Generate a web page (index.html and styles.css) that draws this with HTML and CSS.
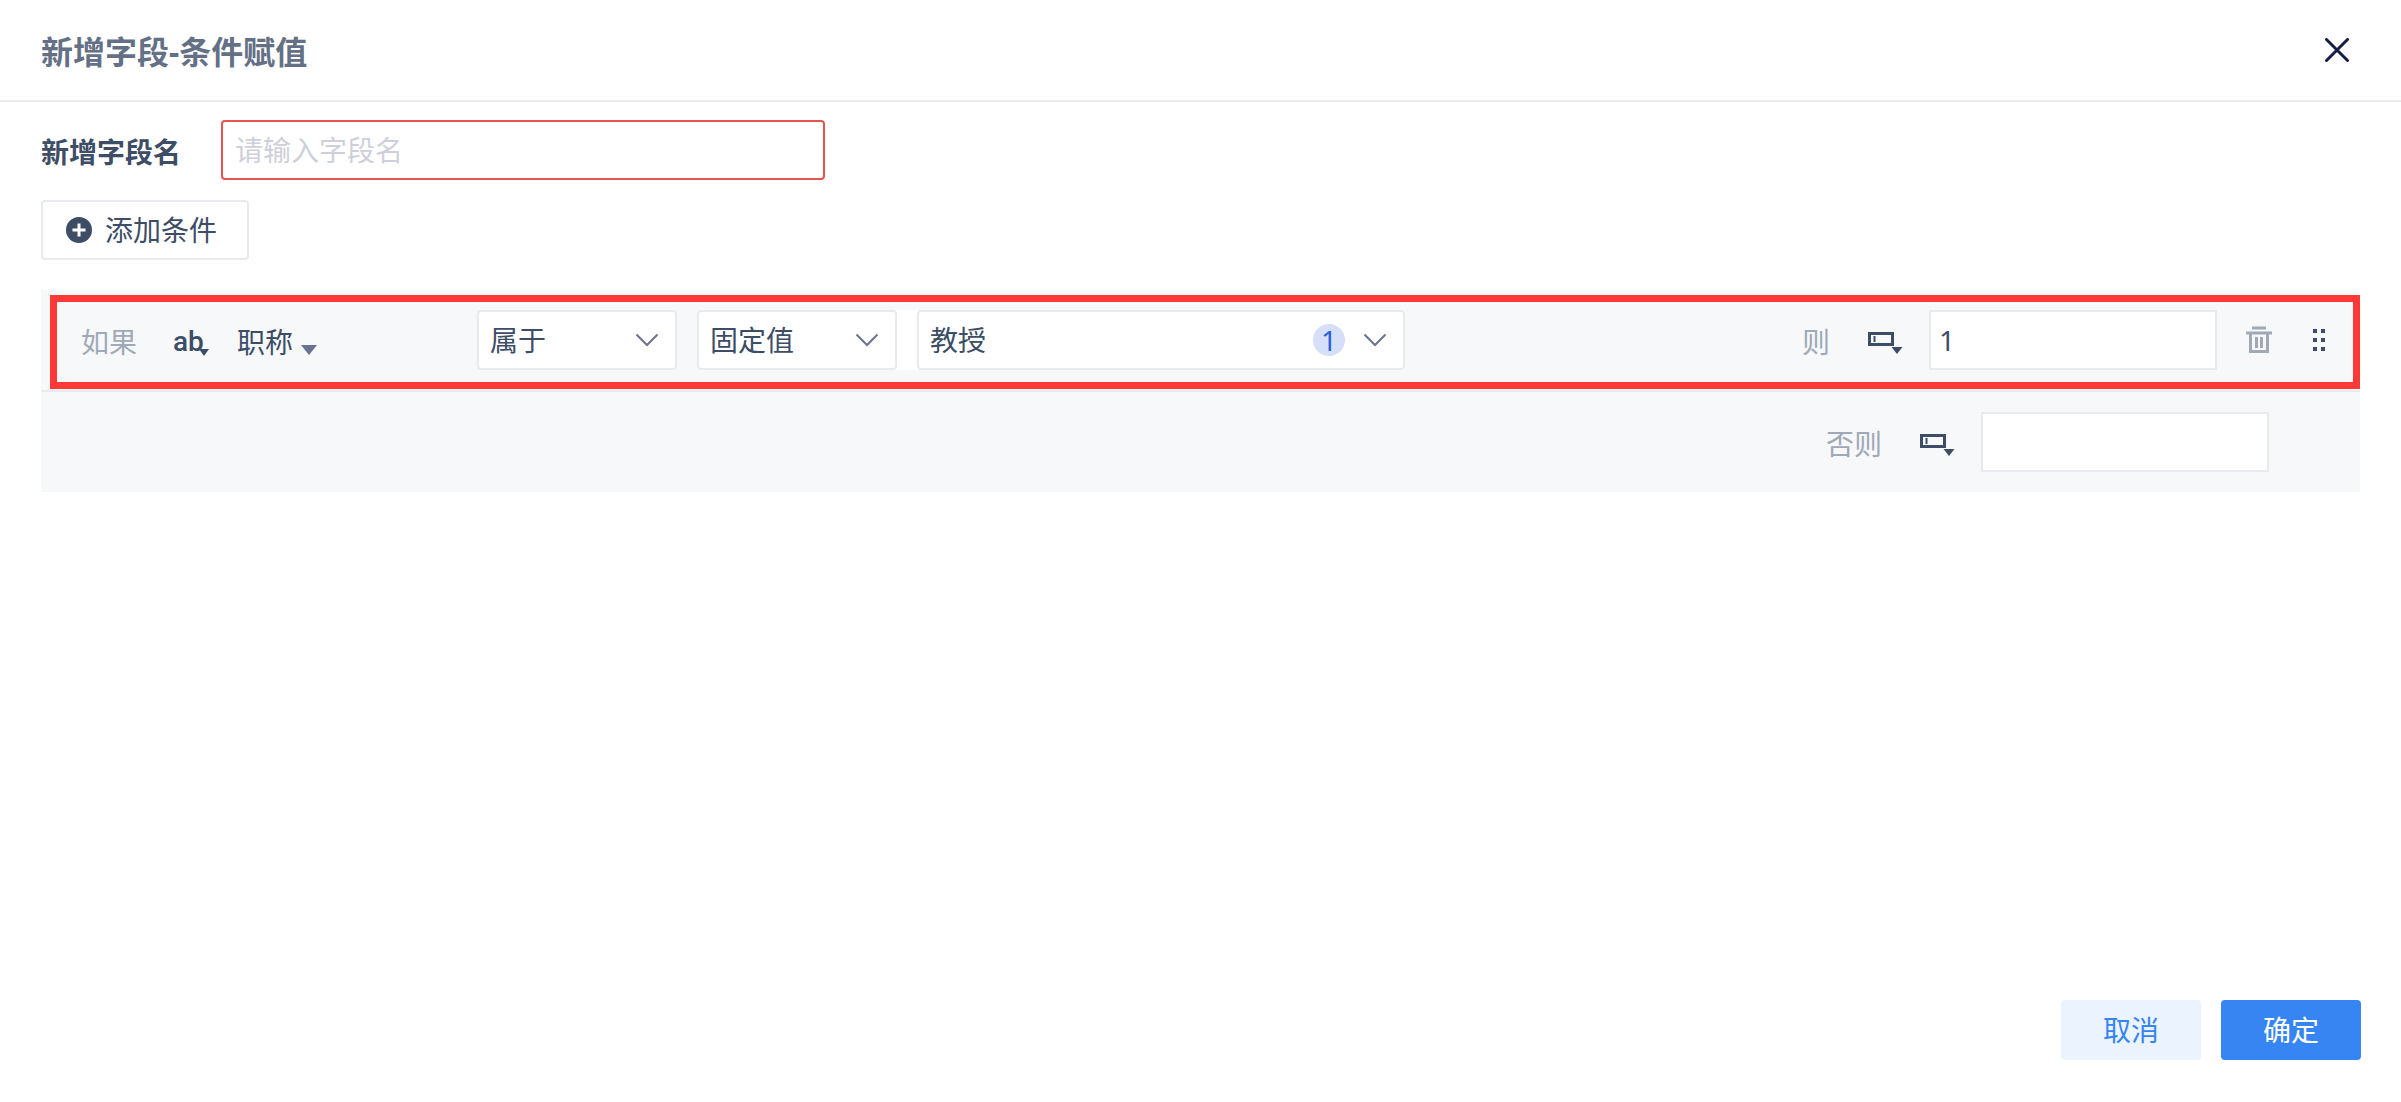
FILE: index.html
```html
<!DOCTYPE html>
<html lang="zh-CN">
<head>
  <meta charset="UTF-8">
  <meta name="viewport" content="width=device-width, initial-scale=1.0">
  <title>新增字段-条件赋值</title>
  <link rel="stylesheet" href="styles.css">
</head>
<body>
  <div class="dialog">
    <header class="dialog-header">
      <h1>新增字段-条件赋值</h1>
      <button type="button" class="icon-btn" aria-label="关闭">
        <svg width="48" height="24" viewBox="0 0 48 24"><path d="M14.5 1.5l21 21M35.5 1.5l-21 21" stroke="#141c4a" stroke-width="3" stroke-linecap="round"/></svg>
      </button>
    </header>

    <main class="dialog-body">
      <div class="name-row">
        <label for="field-name">新增字段名</label>
        <input type="text" id="field-name" class="name-input" placeholder="请输入字段名">
      </div>

      <button type="button" class="add-btn">
        <svg width="26" height="26" viewBox="0 0 26 26"><circle cx="13" cy="13" r="13" fill="#3d4d66"/><path d="M13 6.5v13M6.5 13h13" stroke="#fff" stroke-width="3"/></svg>
        添加条件
      </button>

      <div class="rules">
        <div class="rule highlighted">
          <div class="rule-field">
            <span class="hint">如果</span>
            <button type="button" class="icon-btn type-btn text-type" aria-label="字段类型">
              <span>ab</span>
              <svg width="10" height="7" viewBox="0 0 10 7"><path d="M0 0h10L5 7z" fill="#3d4d66"/></svg>
            </button>
            <button type="button" class="icon-btn field-btn">
              职称
              <svg width="16" height="10" viewBox="0 0 16 10"><path d="M0 0h16L8 10z" fill="#6b7190"/></svg>
            </button>
          </div>

          <div class="select-box">
            <select aria-label="条件"><option>属于</option></select>
            <svg class="chevron" width="24" height="14" viewBox="0 0 24 14"><path d="M1.5 1.5L12 12L22.5 1.5" fill="none" stroke="#6c7390" stroke-width="2"/></svg>
          </div>
          <div class="value-group">
            <div class="select-box">
              <select aria-label="值类型"><option>固定值</option></select>
              <svg class="chevron" width="24" height="14" viewBox="0 0 24 14"><path d="M1.5 1.5L12 12L22.5 1.5" fill="none" stroke="#6c7390" stroke-width="2"/></svg>
            </div>
            <div class="select-box wide">
              <select aria-label="值"><option>教授</option></select>
              <span class="count">1</span>
              <svg class="chevron" width="24" height="14" viewBox="0 0 24 14"><path d="M1.5 1.5L12 12L22.5 1.5" fill="none" stroke="#6c7390" stroke-width="2"/></svg>
            </div>
          </div>

          <div class="result">
            <label class="hint" for="then-value">则</label>
            <button type="button" class="icon-btn type-btn" aria-label="赋值类型">
              <svg width="36" height="24" viewBox="0 -2 36 24"><path d="M1.5 1.5h23v11h-23z" fill="none" stroke="#3d4d66" stroke-width="3"/><path d="M6.5 4v6" stroke="#3d4d66" stroke-width="2"/><path d="M23.5 15h11L29 22z" fill="#3d4d66"/></svg>
            </button>
            <input type="text" id="then-value" class="value-input" value="1">
          </div>
          <div class="tools">
            <button type="button" class="icon-btn" aria-label="删除">
              <svg width="28" height="28" viewBox="0 0 28 28" fill="none" stroke="#a0a9b7" stroke-width="3"><path d="M7 2h14M1 7h26M5.5 7v18.5h17V7"/><path d="M11.5 11v11M16.5 11v11"/></svg>
            </button>
            <button type="button" class="icon-btn" aria-label="拖动排序">
              <svg width="12" height="22" viewBox="0 0 12 22" fill="#3d4d66"><path d="M0 0h4v4H0zM8 0h4v4H8zM0 9h4v4H0zM8 9h4v4H8zM0 18h4v4H0zM8 18h4v4H8z"/></svg>
            </button>
          </div>
        </div>

        <div class="rule">
          <div class="result">
            <label class="hint" for="else-value">否则</label>
            <button type="button" class="icon-btn type-btn" aria-label="默认值类型">
              <svg width="36" height="24" viewBox="0 -2 36 24"><path d="M1.5 1.5h23v11h-23z" fill="none" stroke="#3d4d66" stroke-width="3"/><path d="M6.5 4v6" stroke="#3d4d66" stroke-width="2"/><path d="M23.5 15h11L29 22z" fill="#3d4d66"/></svg>
            </button>
            <input type="text" id="else-value" class="value-input">
          </div>
        </div>
      </div>
    </main>

    <footer class="dialog-footer">
      <button type="button" class="btn btn-cancel">取消</button>
      <button type="button" class="btn btn-primary">确定</button>
    </footer>
  </div>
</body>
</html>
```
FILE: styles.css
```css
:root {
  --text-color: #3d4d66;
  --title-color: #647085;
  --hint-color: #a0a9b7;
  --border-color: #e8eaee;
  --panel-color: #f7f8fa;
  --primary-color: #3685f2;
  --error-color: #e8534f;
}

* {
  box-sizing: border-box;
  margin: 0;
  padding: 0;
}

body {
  font-family: "Noto Sans", "Noto Sans CJK SC", sans-serif;
  font-size: 28px;
  line-height: 40px;
  color: var(--text-color);
  background: #fff;
}

button,
input,
select {
  font: inherit;
  color: inherit;
}

button {
  cursor: pointer;
}

svg {
  display: block;
  flex: none;
}

.dialog {
  display: flex;
  flex-direction: column;
  min-height: 100vh;
}

.dialog-header {
  display: flex;
  align-items: center;
  justify-content: space-between;
  height: 102px;
  padding: 0 41px;
  border-bottom: 2px solid var(--border-color);
}

h1 {
  padding-top: 4px;
  font-size: 32px;
  color: var(--title-color);
}

.dialog-body {
  flex: 1;
  padding: 18px 41px;
}

.icon-btn {
  display: flex;
  align-items: center;
  border: none;
  background: none;
}

.name-row {
  display: flex;
  align-items: center;
  gap: 40px;
  font-weight: bold;
}

.name-row label {
  padding-top: 4px;
}

.name-input {
  width: 604px;
  height: 60px;
  padding: 0 12px;
  border: 2px solid var(--error-color);
  border-radius: 4px;
  font-weight: normal;
}

.name-input::placeholder {
  color: #cfcfda;
}

.add-btn {
  display: flex;
  align-items: center;
  gap: 13px;
  height: 60px;
  margin-top: 20px;
  padding: 0 30px 0 23px;
  border: 2px solid var(--border-color);
  border-radius: 4px;
  background: #fff;
}

.rules {
  margin-top: 30px;
  background: var(--panel-color);
}

.rule {
  position: relative;
  display: flex;
  align-items: center;
  height: 100px;
  padding: 0 35px 0 40px;
}

.rule + .rule {
  height: 102px;
  padding-right: 91px;
  border-top: 2px solid var(--border-color);
}

.highlighted::after {
  content: "";
  position: absolute;
  inset: 5px 0 1px 9px;
  border: 7px solid #ff3838;
  pointer-events: none;
}

.hint,
.type-btn,
.field-btn {
  padding-top: 4px;
}

.hint {
  color: var(--hint-color);
}

.rule-field {
  display: flex;
  align-items: center;
  width: 396px;
}

.type-btn {
  width: 36px;
  margin: 0 25px 0 38px;
}

.text-type {
  position: relative;
  margin: 0 28px 0 36px;
  font-family: Roboto, sans-serif;
  font-weight: 500;
}

.text-type svg {
  position: absolute;
  right: 0;
  bottom: 6px;
}

.field-btn {
  gap: 8px;
}

.field-btn svg {
  margin-top: 16px;
}

.select-box {
  position: relative;
  width: 200px;
  margin-right: 20px;
}

.select-box.wide {
  width: 488px;
  margin-right: 0;
}

.select-box select {
  display: block;
  width: 100%;
  height: 60px;
  padding: 0 50px 0 11px;
  border: 2px solid var(--border-color);
  border-radius: 4px;
  background: #fff;
  appearance: none;
}

.chevron {
  position: absolute;
  top: 23px;
  right: 18px;
  pointer-events: none;
}

.count {
  position: absolute;
  top: 14px;
  right: 60px;
  width: 32px;
  height: 32px;
  border-radius: 50%;
  background: #d5dff8;
  color: #2b5fd9;
  line-height: 32px;
  text-align: center;
}

.value-group {
  display: flex;
  background: #fff;
}

.result {
  display: flex;
  align-items: center;
  margin-left: auto;
}

.value-input {
  width: 288px;
  height: 60px;
  padding: 0 8px;
  border: 2px solid var(--border-color);
  background: #fff;
}

.tools {
  display: flex;
  align-items: center;
  gap: 40px;
  margin-left: 28px;
}

.dialog-footer {
  display: flex;
  justify-content: flex-end;
  gap: 20px;
  padding: 0 40px 42px;
}

.btn {
  width: 140px;
  height: 60px;
  border: none;
  border-radius: 4px;
}

.btn-cancel {
  background: #ebf3ff;
  color: var(--primary-color);
}

.btn-primary {
  background: var(--primary-color);
  color: #fff;
}
```
